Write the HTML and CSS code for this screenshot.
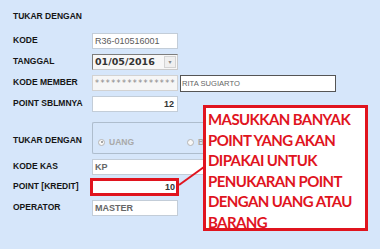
FILE: index.html
```
<!DOCTYPE html>
<html lang="id">
<head>
  <meta charset="UTF-8" />
  <title>Tukar Point</title>
  <link rel="stylesheet" href="styles.css">
</head>
<body>
  <div class="form">
    <div class="title">TUKAR DENGAN</div>

    <div class="row">
      <span class="label">KODE</span>
      <div class="field light">R36-010516001</div>
    </div>

    <div class="row">
      <span class="label">TANGGAL</span>
      <div class="field date">
        <span>01/05/2016</span>
        <span class="drop">&#9662;</span>
      </div>
    </div>

    <div class="row">
      <span class="label">KODE MEMBER</span>
      <div class="field masked">***************</div>
      <div class="field name">RITA SUGIARTO</div>
    </div>

    <div class="row">
      <span class="label">POINT SBLMNYA</span>
      <div class="field num">12</div>
    </div>

    <div class="row group-row">
      <span class="label">TUKAR DENGAN</span>
      <div class="group">
        <label class="radio"><span class="dot on"></span>UANG</label>
        <label class="radio"><span class="dot"></span>BARANG</label>
      </div>
    </div>

    <div class="row">
      <span class="label">KODE KAS</span>
      <div class="field bold wide">KP</div>
    </div>

    <div class="row kredit-row">
      <span class="label">POINT [KREDIT]</span>
      <div class="field kredit">10</div>
    </div>

    <div class="row">
      <span class="label">OPERATOR</span>
      <div class="field bold">MASTER</div>
    </div>
  </div>

  <svg class="connector" width="30" height="24" viewBox="0 0 30 24">
    <line x1="1" y1="21" x2="26" y2="3" stroke="#e0141e" stroke-width="2" />
  </svg>

  <div class="callout">
    MASUKKAN BANYAK<br>
    POINT YANG AKAN<br>
    DIPAKAI UNTUK<br>
    PENUKARAN POINT<br>
    DENGAN UANG ATAU<br>
    BARANG
  </div>
</body>
</html>
```

FILE: styles.css
```
body {
  margin: 0;
  width: 380px;
  height: 249px;
  overflow: hidden;
  background: #d6e6fa;
  font-family: "Liberation Sans", Arial, sans-serif;
  position: relative;
}
.form {
  padding: 8px 0 0 13px;
}
.title, .label {
  font-size: 8.5px;
  font-weight: bold;
  color: #151515;
}
.title {
  height: 16px;
  line-height: 16px;
}
.row {
  display: flex;
  align-items: center;
  height: 16px;
  margin-top: 5px;
}
.title + .row {
  margin-top: 9px;
}
.label {
  width: 79px;
  flex: none;
  padding-bottom: 3px;
}
.field {
  box-sizing: border-box;
  width: 86px;
  height: 16px;
  background: #fff;
  border: 1px solid #c3cdd8;
  font-size: 9px;
  color: #555;
  padding: 0 2px;
  line-height: 14px;
  overflow: hidden;
  white-space: nowrap;
}
.light {
  color: #5a5a5a;
}
.date {
  display: flex;
  justify-content: space-between;
  border-color: #7d7d7d #c9c9c9 #c9c9c9 #7d7d7d;
  background: #f7f7f7;
  font-family: "DejaVu Sans", sans-serif;
  font-weight: bold;
  font-size: 9.5px;
  color: #333;
  padding-right: 0;
}
.drop {
  width: 12px;
  margin: 1px 1px 1px 0;
  height: 12px;
  border: 1px solid #d3d3d3;
  background: #efefef;
  box-sizing: border-box;
  font-size: 6px;
  line-height: 10px;
  text-align: center;
  color: #888;
  font-weight: normal;
}
.masked {
  background: #f6f6f6;
  border-color: #d2d2d2;
  color: #888;
  letter-spacing: 1.4px;
  font-family: "DejaVu Sans", sans-serif;
  font-size: 8px;
  padding-top: 1px;
}
.name {
  width: 156px;
  height: 17px;
  margin-left: 2px;
  border: 1px solid #555;
  font-size: 7.6px;
  color: #666;
  line-height: 15px;
  padding-left: 1px;
}
.num, .kredit {
  text-align: right;
  font-weight: bold;
  color: #333;
  padding-right: 3px;
}
.group-row {
  height: 32px;
  margin-top: 10px;
}
.group-row .label {
  padding-bottom: 0;
  padding-top: 4px;
}
.group {
  box-sizing: border-box;
  width: 113px;
  height: 32px;
  border: 1px solid #aebdcd;
  border-right: none;
  border-radius: 2px 0 0 2px;
  display: flex;
  align-items: center;
  padding: 8px 0 0 5px;
  gap: 53px;
  overflow: hidden;
  white-space: nowrap;
}
.radio {
  display: flex;
  align-items: center;
  gap: 4px;
  font-size: 8.5px;
  font-weight: bold;
  color: #a9a9a9;
  flex: none;
}
.dot {
  width: 7px;
  height: 7px;
  box-sizing: border-box;
  border: 1px solid #b5b5b5;
  border-radius: 50%;
  background: #f8f8f8;
  position: relative;
}
.dot.on::after {
  content: "";
  position: absolute;
  left: 1.5px;
  top: 1.5px;
  width: 2px;
  height: 2px;
  border-radius: 50%;
  background: #8a8a8a;
}
.bold {
  font-weight: bold;
  color: #666;
}
.wide {
  width: 113px;
  border-right: none;
}
.kredit-row {
  height: 18px;
  margin-top: 3px;
}
.kredit {
  width: 89px;
  height: 18px;
  margin-left: -2px;
  border: 3px solid #e0141e;
  line-height: 12px;
  padding-right: 1px;
}
.kredit-row + .row {
  margin-top: 4px;
}
.connector {
  position: absolute;
  left: 178px;
  top: 164px;
}
.callout {
  position: absolute;
  left: 203px;
  top: 105px;
  width: 165px;
  height: 126px;
  box-sizing: border-box;
  border: 3px solid #e0141e;
  background: #fff;
  padding: 1px 0 0 2px;
  font-family: Lato, "Liberation Sans", sans-serif;
  font-weight: bold;
  font-size: 15px;
  line-height: 20.5px;
  letter-spacing: -0.6px;
  color: #e0141e;
  white-space: nowrap;
}
```
